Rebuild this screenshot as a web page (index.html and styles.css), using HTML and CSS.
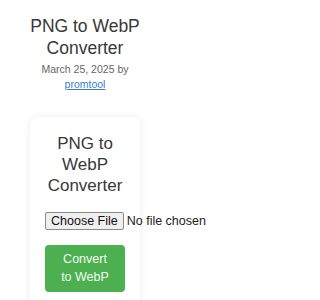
FILE: index.html
```html
<!DOCTYPE html>
<html lang="en">
<head>
<meta charset="utf-8">
<title>PNG to WebP Converter</title>
<link rel="stylesheet" href="styles.css">
</head>
<body>
<div class="page">
  <header class="post-header">
    <h1 class="post-title">PNG to WebP Converter</h1>
    <p class="post-meta">March 25, 2025 by <a href="#" class="author">promtool</a></p>
  </header>
  <section class="card">
    <h2 class="card-title">PNG to WebP Converter</h2>
    <input type="file" class="file-input" accept="image/png">
    <button class="convert-btn" type="button">Convert to WebP</button>
  </section>
</div>
</body>
</html>
```

FILE: styles.css
```css
html, body {
  margin: 0;
  padding: 0;
  background: #ffffff;
}

body {
  font-family: "Liberation Sans", Arial, sans-serif;
  color: #333333;
  overflow: hidden;
}

.page {
  width: 110px;
  margin-left: 30px;
  padding-top: 16px;
}

.post-header {
  text-align: center;
}

.post-title {
  margin: 0;
  font-size: 17.5px;
  line-height: 21.5px;
  font-weight: normal;
  color: #383838;
}

.post-meta {
  margin: 3px 0 0;
  font-size: 10.5px;
  line-height: 15px;
  color: #666666;
}

.author {
  color: #3b80c4;
  text-decoration: underline;
}

.card {
  margin-top: 25px;
  padding: 16px 15px 20px;
  background: #ffffff;
  border-radius: 8px;
  box-shadow: 0 0 8px rgba(0, 0, 0, 0.07);
}

.card-title {
  margin: 0 0 16px;
  font-size: 17px;
  line-height: 21px;
  font-weight: normal;
  text-align: center;
  color: #383838;
}

.file-input {
  display: block;
  font-family: "Liberation Sans", Arial, sans-serif;
  font-size: 12.5px;
  line-height: 18px;
  color: #222222;
  white-space: nowrap;
}

.file-input::file-selector-button {
  font-family: "Liberation Sans", Arial, sans-serif;
  font-size: 12.5px;
  line-height: 14px;
  padding: 1px 5px;
  margin-right: 3px;
  border: 1px solid #8a8a8a;
  border-radius: 2px;
  background: #efefef;
  color: #111111;
}

.convert-btn {
  display: block;
  width: 100%;
  margin-top: 15px;
  padding: 6px 14px;
  border: none;
  border-radius: 4px;
  background: #4caf50;
  color: #f4fbf4;
  font-family: "Liberation Sans", Arial, sans-serif;
  font-size: 12.5px;
  line-height: 17.6px;
  text-align: center;
}
```
